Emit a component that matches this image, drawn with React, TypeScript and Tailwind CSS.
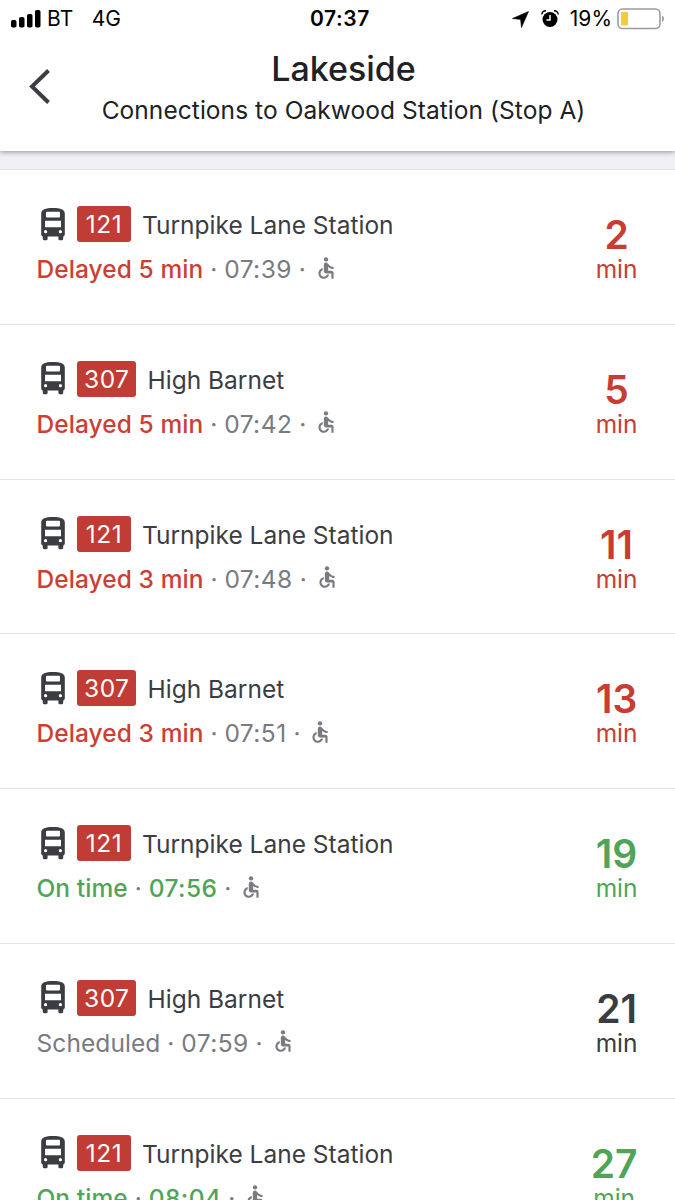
import React from "react";
import clsx from "clsx";

type Status = "delayed" | "ontime" | "scheduled";

interface Departure {
  route: string;
  destination: string;
  status: Status;
  label: string;
  time: string;
  minutes: number;
}

const departures: Departure[] = [
  { route: "121", destination: "Turnpike Lane Station", status: "delayed", label: "Delayed 5 min", time: "07:39", minutes: 2 },
  { route: "307", destination: "High Barnet", status: "delayed", label: "Delayed 5 min", time: "07:42", minutes: 5 },
  { route: "121", destination: "Turnpike Lane Station", status: "delayed", label: "Delayed 3 min", time: "07:48", minutes: 11 },
  { route: "307", destination: "High Barnet", status: "delayed", label: "Delayed 3 min", time: "07:51", minutes: 13 },
  { route: "121", destination: "Turnpike Lane Station", status: "ontime", label: "On time", time: "07:56", minutes: 19 },
  { route: "307", destination: "High Barnet", status: "scheduled", label: "Scheduled", time: "07:59", minutes: 21 },
  { route: "121", destination: "Turnpike Lane Station", status: "ontime", label: "On time", time: "08:04", minutes: 27 },
];

const labelColor = {
  delayed: "text-[#cb3f34] font-medium",
  ontime: "text-[#50a458] font-medium",
  scheduled: "text-[#797b80]",
};

const minutesColor = {
  delayed: "text-[#c93c32]",
  ontime: "text-[#50a458]",
  scheduled: "text-[#3a3c40]",
};

function BusIcon() {
  return (
    <svg width="24" height="33" viewBox="0 0 24 33" className="shrink-0">
      <path
        fill="#3b3d42"
        fillRule="evenodd"
        d="M.2 5.5C.2 1.400 4.500 0 12 0s11.800 1.400 11.800 5.500V26c0 1.300-.4 2.200-1.600 2.500v2.300a1.500 1.500 0 0 1-1.500 1.500h-1.800a1.500 1.500 0 0 1-1.500-1.500v-2.200H6.600v2.200a1.500 1.500 0 0 1-1.500 1.500H3.300a1.500 1.500 0 0 1-1.500-1.500v-2.300C.6 28.200.2 27.300.2 26zM6 3.700a1 1 0 0 0-1 1v3.700a1 1 0 0 0 1 1h12a1 1 0 0 0 1-1V4.700a1 1 0 0 0-1-1zM4 12.800v6.500h16v-6.500zM4.600 22.100a1.600 1.600 0 1 0 0 3.200 1.600 1.600 0 0 0 0-3.200zm14.800 0a1.600 1.600 0 1 0 0 3.200 1.600 1.600 0 0 0 0-3.200z"
      />
    </svg>
  );
}

function AccessibleIcon() {
  return (
    <svg width="26" height="26" viewBox="0 0 24 24" fill="#797b80" className="shrink-0 -mt-[3px]">
      <circle cx="12" cy="4" r="2" />
      <path d="M19 13v-2c-1.54.02-3.09-.75-4.07-1.83l-1.29-1.43c-.17-.19-.38-.34-.61-.45-.01 0-.01-.01-.02-.01H13c-.35-.2-.75-.3-1.19-.26C10.76 7.11 10 8.04 10 9.09V15c0 1.1.9 2 2 2h5v5h2v-5.5c0-1.1-.9-2-2-2h-3v-3.45c1.29 1.07 3.25 1.94 5 1.95zm-6.17 5c-.41 1.16-1.52 2-2.83 2-1.66 0-3-1.34-3-3 0-1.31.84-2.41 2-2.83V12.1c-2.28.46-4 2.48-4 4.9 0 2.76 2.24 5 5 5 2.42 0 4.44-1.72 4.9-4h-2.07z" />
    </svg>
  );
}

function StatusBar() {
  return (
    <div className="grid grid-cols-3 items-center h-[38px] pl-[11px] pr-2.5 text-[21px] leading-[38px] text-black">
      <div className="flex items-center">
        <svg width="31" height="19" viewBox="0 0 31 19">
          <rect x="0" y="10" width="5.5" height="7.500" rx="1.8" />
          <rect x="8" y="7" width="5.5" height="10.500" rx="1.8" />
          <rect x="16" y="4" width="5.5" height="13.500" rx="1.8" />
          <rect x="24" y="0" width="5.5" height="17.500" rx="1.8" />
        </svg>
        <span className="ml-[5px] tracking-[0.3px]">BT</span>
        <span className="ml-[18px]">4G</span>
      </div>
      <div className="pl-1 text-center font-semibold tracking-[0.6px]">07:37</div>
      <div className="flex items-center justify-end">
        <svg width="17" height="17" viewBox="0 0 17 17">
          <path d="M16.5.5 9.5 16.5 8.6 8.4.5 7.5z" stroke="#000" strokeWidth=".6" strokeLinejoin="round" />
        </svg>
        <svg width="18" height="18" viewBox="0 0 18 18" className="ml-3">
          <circle cx="9" cy="9.5" r="7.5" />
          <path d="M.8 4.5C1 2 2.500.9 5 .8M17.2 4.5C17 2 15.5.9 13 .8" fill="none" stroke="#000" strokeWidth="1.4" />
          <path d="M9 5v5H5.5" fill="none" stroke="#fff" strokeWidth="1.5" />
        </svg>
        <span className="ml-[11px]">19%</span>
        <svg width="48" height="22" viewBox="0 0 48 22" className="ml-[5px] shrink-0">
          <rect x="1" y="1" width="42" height="19.5" rx="4.5" fill="none" stroke="#9b9b9d" strokeWidth="1.6" />
          <rect x="4" y="4" width="7" height="13.5" rx="1" fill="#f7ca3e" />
          <path d="M45 7.5c2.5 1 2.5 5.5 0 6.500z" fill="#9b9b9d" />
        </svg>
      </div>
    </div>
  );
}

function DepartureRow({ departure }: { departure: Departure }) {
  const { route, destination, status, label, time, minutes } = departure;

  return (
    <li className="flex justify-between h-[154.75px] border-t border-[#e2e2e4] pl-[36.5px] pr-[37.5px]">
      <div className="pt-9">
        <div className="flex items-center h-9">
          <div className="ml-[4.5px]">
            <BusIcon />
          </div>
          <span className="ml-3 h-9 min-w-[54px] px-[7px] rounded-[3px] bg-[#c13c34] text-white text-center text-[24.5px] leading-9 tracking-[0.5px]">
            {route}
          </span>
          <span className="ml-[11px] mt-0.5 text-[24.5px] leading-9 text-[#3b3d42]">{destination}</span>
        </div>
        <div className="flex items-center mt-[9px] h-9 text-[24.5px] leading-9 text-[#797b80] whitespace-pre">
          <span className={clsx("tracking-[0.08px]", labelColor[status])}>{label}</span>
          <span> · </span>
          <span className={clsx("tracking-[0.45px]", status === "ontime" && labelColor[status])}>{time}</span>
          <span> · </span>
          <AccessibleIcon />
        </div>
      </div>
      <div className={clsx("pt-[45px] text-center", minutesColor[status])}>
        <div className="text-[39px] leading-10 font-semibold">{minutes}</div>
        <div className="text-[24.5px] leading-[29px]">min</div>
      </div>
    </li>
  );
}

export default function App() {
  return (
    <div className="w-full h-[1200px] overflow-hidden bg-white font-['Inter',sans-serif]">
      <header className="relative h-[151px] bg-white shadow-[0_1px_5px_rgba(0,0,0,0.4)]">
        <StatusBar />
        <div className="flex items-start">
          <button className="ml-7 mt-[30px] w-6" aria-label="Back">
            <svg width="24" height="38" viewBox="0 0 24 38">
              <path d="M20.5 2.500 4 18.500l16.500 16" fill="none" stroke="#3b3d42" strokeWidth="4" />
            </svg>
          </button>
          <div className="flex-1 pr-10 text-center text-[#202124]">
            <h1 className="mt-2.5 text-[34px] leading-[42px] font-medium">Lakeside</h1>
            <p className="mt-[3px] text-[24.5px] leading-[34px] tracking-[0.06px]">
              Connections to Oakwood Station (Stop A)
            </p>
          </div>
        </div>
      </header>
      <div className="h-[18px] bg-[#eff0f4]" />
      <ul>
        {departures.map((departure, idx) => (
          <DepartureRow key={`departure-${idx}`} departure={departure} />
        ))}
      </ul>
    </div>
  );
}
